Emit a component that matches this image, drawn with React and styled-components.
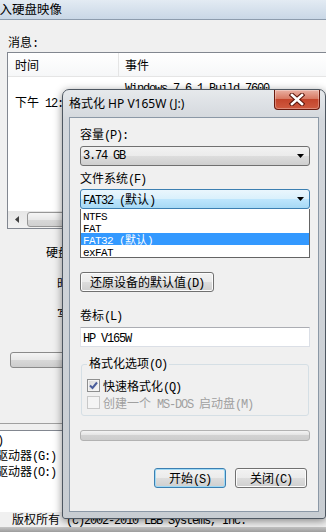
import React from 'react';
import styled, { createGlobalStyle } from 'styled-components';

const GlobalStyle = createGlobalStyle`
  html, body { margin: 0; padding: 0; background: #f0f0f0; }
  body {
    font-family: "Noto Sans CJK SC", "Noto Sans", sans-serif;
    font-size: 12px;
    color: #000;
  }
`;

// SimSun-like half width latin
const Lat = styled.span`
  font-family: "Liberation Mono", "DejaVu Sans Mono", monospace;
  font-size: 12px;
  letter-spacing: -1.2px;
`;

const Desktop = styled.div`
  position: relative;
  width: 326px;
  height: 532px;
  overflow: hidden;
  background: #f0f0f0;
`;

/* ---------- window behind ---------- */

const BgWindow = styled.div`
  display: flex;
  flex-direction: column;
  height: 100%;
`;

const BgTitle = styled.div`
  height: 19px;
  border-bottom: 1px solid #8d9cad;
  background: linear-gradient(#e3ebf3, #c9d7e6);
  font-size: 12.5px;
  line-height: 17px;
  white-space: nowrap;
`;

const BgTitleText = styled.span`
  display: inline-block;
  margin-left: -13px;
`;

const BgLabel = styled.div`
  margin-top: 15px;
  padding-left: 8px;
  height: 14px;
  line-height: 14px;
`;

const MsgList = styled.div`
  margin: 3px -20px 0 7px;
  height: 177px;
  box-sizing: border-box;
  border: 1px solid #828790;
  background: #fff;
  display: flex;
  flex-direction: column;
`;

const ListHead = styled.div`
  display: grid;
  grid-template-columns: 111px 1fr;
  height: 23px;
  border-bottom: 1px solid #e5e5e5;
  background: linear-gradient(#fff, #f6f7f8);
  line-height: 23px;
`;

const HeadCell = styled.div`
  padding-left: ${p => p.$pad}px;
  border-right: ${p => (p.$sep ? '1px solid #e5e5e5' : 'none')};
`;

const ListRow = styled.div`
  display: grid;
  grid-template-columns: 111px 1fr;
  height: 50px;
`;

const TimeCell = styled.div`
  padding-left: 7px;
  line-height: 50px;
  white-space: nowrap;
`;

const EventCell = styled.div`
  padding: 4px 0 0 6px;
  line-height: 12px;
  white-space: nowrap;
`;

const HScroll = styled.div`
  margin-top: auto;
  height: 17px;
  display: flex;
  background: linear-gradient(#e6e6e6, #f1f1f1);
`;

const ScrollArrow = styled.div`
  width: 18px;
  display: flex;
  align-items: center;
  justify-content: center;
`;

const ScrollThumb = styled.div`
  flex: 1;
  margin: 1px 0 1px 1px;
  border: 1px solid #979797;
  border-radius: 3px;
  background: linear-gradient(#f6f6f6, #e9e9e9 50%, #d9d9d9 50%, #d0d0d0);
`;

const FieldRows = styled.div`
  margin-top: 7px;
`;

const FieldRow = styled.div`
  height: 31px;
  line-height: 31px;
  padding-left: ${p => p.$indent}px;
  white-space: nowrap;
`;

const WideButton = styled.div`
  margin: 23px -20px 0 10px;
  height: 16px;
  box-sizing: border-box;
  border: 1px solid #8a8a8a;
  border-radius: 3px;
  background: linear-gradient(#f4f4f4, #e8e8e8 50%, #d8d8d8 50%, #cdcdcd);
`;

const Divider = styled.div`
  margin-top: 55px;
  height: 6px;
  border-top: 1px solid #a0a0a0;
`;

const DriveList = styled.div`
  height: 82px;
  box-sizing: border-box;
  border-top: 1px solid #828790;
  background: #fff;
`;

const DriveLine = styled.div`
  height: 16px;
  line-height: 16px;
  margin-left: ${p => p.$shift}px;
  white-space: nowrap;
`;

const Copyright = styled.div`
  height: 15px;
  line-height: 14px;
  padding-left: 12px;
  white-space: nowrap;
`;

const BottomStrip = styled.div`
  flex: 1;
  background: linear-gradient(#c6c6c6, #9c9c9c);
`;

/* ---------- format dialog ---------- */

const Dialog = styled.div`
  position: absolute;
  left: 62px;
  top: 89px;
  width: 264px;
  height: 430px;
  box-sizing: border-box;
  border: 1px solid #4e5761;
  border-radius: 7px 7px 3px 3px;
  background: linear-gradient(#e6e9ec, #d3d7dc 30px, #c8cdd2);
  padding: 0 6px 6px 6px;
  display: flex;
  flex-direction: column;
  box-shadow: 0 2px 8px rgba(0, 0, 0, 0.45);
`;

const TitleBar = styled.div`
  height: 27px;
  display: flex;
  align-items: flex-start;
`;

const TitleText = styled.div`
  flex: 1;
  line-height: 27px;
  font-size: 12px;
  white-space: nowrap;
  font-family: "Noto Sans", "Noto Sans CJK SC", sans-serif;
`;

const CloseButton = styled.div`
  width: 46px;
  height: 20px;
  margin-right: -1px;
  box-sizing: border-box;
  border: 1px solid #6a1a0e;
  border-top: none;
  border-radius: 0 0 4px 4px;
  background: linear-gradient(#eab0a3, #d87a64 45%, #c4452c 50%, #cf5a40 100%);
  box-shadow: inset 0 0 0 1px rgba(255, 255, 255, 0.3);
  display: flex;
  align-items: center;
  justify-content: center;
`;

const Client = styled.div`
  flex: 1;
  border: 1px solid #8b98a6;
  background: #f0f0f0;
  padding: 0 8px 0 10px;
  display: flex;
  flex-direction: column;
`;

const FieldLabel = styled.div`
  margin-top: ${p => p.$gap}px;
  height: 14px;
  line-height: 14px;
  white-space: nowrap;
`;

const Combo = styled.div`
  margin-top: ${p => p.$gap}px;
  height: 20px;
  box-sizing: border-box;
  border: 1px solid ${p => (p.$open ? '#3c7fb1' : '#707070')};
  border-radius: 3px;
  background: ${p =>
    p.$open
      ? 'linear-gradient(#eaf6fd, #d9f0fc 50%, #bee6fd 50%, #a7d9f5)'
      : 'linear-gradient(#f2f2f2, #ebebeb 50%, #dddddd 50%, #cfcfcf)'};
  display: flex;
  align-items: center;
  justify-content: space-between;
  padding: 0 5px 0 2px;
  white-space: nowrap;
`;

const DropList = styled.div`
  border: 1px solid #646464;
  border-top: none;
  background: #fff;
`;

const DropItem = styled.div`
  height: 12px;
  line-height: 12px;
  font-size: 11px;
  padding-left: 2px;
  white-space: nowrap;
  background: ${p => (p.$sel ? '#3399ff' : 'transparent')};
  color: ${p => (p.$sel ? '#fff' : '#000')};

  ${Lat} {
    font-size: 11px;
    letter-spacing: -0.6px;
  }
`;

const PushButton = styled.button`
  width: ${p => p.$w}px;
  height: 20px;
  padding: 0;
  border: 1px solid ${p => (p.$focus ? '#3c7fb1' : '#707070')};
  border-radius: 3px;
  background: linear-gradient(#f2f2f2, #ebebeb 50%, #dddddd 50%, #cfcfcf);
  box-shadow: inset 0 0 0 1px ${p => (p.$focus ? '#9fdaf6' : '#fcfcfc')};
  font-family: inherit;
  font-size: 12px;
  line-height: 18px;
  color: #000;
  white-space: nowrap;
`;

const RestoreButton = styled(PushButton)`
  margin-top: 14px;
  align-self: flex-start;
`;

const TextBox = styled.div`
  margin-top: 5px;
  height: 20px;
  box-sizing: border-box;
  border: 1px solid #dbdfe6;
  border-top-color: #abadb3;
  border-left-color: #e2e3ea;
  background: #fff;
  padding-left: 2px;
  line-height: 18px;
`;

const Group = styled.fieldset`
  margin: 9px 1px 0;
  padding: 5px 0 4px 5px;
  border: 1px solid #d5dfe5;
  border-radius: 3px;
  min-width: 0;
`;

const GroupTitle = styled.legend`
  padding: 0 2px;
  line-height: 14px;
  font-size: 12px;
`;

const CheckRow = styled.div`
  height: 17px;
  display: flex;
  align-items: center;
  gap: 3px;
  white-space: nowrap;
  color: ${p => (p.$disabled ? '#a0a0a0' : '#000')};
`;

const CheckBox = styled.span`
  width: 13px;
  height: 13px;
  box-sizing: border-box;
  border: 1px solid ${p => (p.$disabled ? '#c8c8c8' : '#8e8f8f')};
  background: ${p => (p.$disabled ? '#f4f4f4' : 'linear-gradient(135deg, #d6d6d6, #fbfbfb)')};
  box-shadow: inset 0 0 0 1px #f4f4f4;
  display: flex;
  align-items: center;
  justify-content: center;
`;

const Progress = styled.div`
  margin-top: 14px;
  height: 11px;
  box-sizing: border-box;
  border: 1px solid #b2b2b2;
  border-radius: 3px;
  background: linear-gradient(#f3f3f3, #e2e2e2 50%, #d2d2d2 50%, #cdcdcd);
`;

const ButtonRow = styled.div`
  margin-top: 27px;
  display: flex;
  justify-content: flex-end;
  gap: 9px;
  padding-right: 3px;
`;

const Arrow = () => (
  <svg width="7" height="4" viewBox="0 0 7 4">
    <polygon points="0,0 7,0 3.5,4" fill="#000" />
  </svg>
);

const CloseX = () => (
  <svg width="16" height="13" viewBox="0 0 16 13">
    <path d="M3 2 L13 11 M13 2 L3 11" stroke="#5b150a" strokeWidth="4.6" strokeLinecap="square" />
    <path d="M3 2 L13 11 M13 2 L3 11" stroke="#fff" strokeWidth="2.6" strokeLinecap="square" />
  </svg>
);

const Tick = () => (
  <svg width="9" height="9" viewBox="0 0 9 9">
    <path d="M1 4.5 L3.5 7 L8 1.5" fill="none" stroke="#4a5d9b" strokeWidth="2" />
  </svg>
);

const fsItems = [
  { key: 'ntfs', label: <Lat>NTFS</Lat> },
  { key: 'fat', label: <Lat>FAT</Lat> },
  { key: 'fat32', label: <><Lat>FAT32 (</Lat>默认<Lat>)</Lat></>, sel: true },
  { key: 'exfat', label: <Lat>exFAT</Lat> },
];

export default function App() {
  return (
    <>
      <GlobalStyle />
      <Desktop>
        <BgWindow>
          <BgTitle>
            <BgTitleText>写入硬盘映像</BgTitleText>
          </BgTitle>
          <BgLabel>消息<Lat>:</Lat></BgLabel>
          <MsgList>
            <ListHead>
              <HeadCell $pad={7} $sep>时间</HeadCell>
              <HeadCell $pad={6}>事件</HeadCell>
            </ListHead>
            <ListRow>
              <TimeCell>下午<Lat> 12:</Lat></TimeCell>
              <EventCell>
                <Lat>Windows 7 6.1 Build 7600</Lat>
              </EventCell>
            </ListRow>
            <HScroll>
              <ScrollArrow>
                <svg width="4" height="7" viewBox="0 0 4 7">
                  <polygon points="4,0 4,7 0,3.5" fill="#404040" />
                </svg>
              </ScrollArrow>
              <ScrollThumb />
            </HScroll>
          </MsgList>
          <FieldRows>
            <FieldRow $indent={46}>硬盘</FieldRow>
            <FieldRow $indent={57}>时</FieldRow>
            <FieldRow $indent={57}>写</FieldRow>
          </FieldRows>
          <WideButton />
          <Divider />
          <DriveList>
            <DriveLine $shift={-57}>驱动器<Lat>(F:)</Lat></DriveLine>
            <DriveLine $shift={-4}>驱动器<Lat>(G:)</Lat></DriveLine>
            <DriveLine $shift={-4}>驱动器<Lat>(O:)</Lat></DriveLine>
          </DriveList>
          <Copyright>
            版权所有<Lat> (c)2002-2010 LBB Systems, Inc.</Lat>
          </Copyright>
          <BottomStrip />
        </BgWindow>

        <Dialog>
          <TitleBar>
            <TitleText>格式化 HP V165W (J:)</TitleText>
            <CloseButton>
              <CloseX />
            </CloseButton>
          </TitleBar>
          <Client>
            <FieldLabel $gap={9}>容量<Lat>(P):</Lat></FieldLabel>
            <Combo $gap={5}>
              <Lat>3.74 GB</Lat>
              <Arrow />
            </Combo>
            <FieldLabel $gap={5}>文件系统<Lat>(F)</Lat></FieldLabel>
            <Combo $gap={4} $open>
              <span>
                <Lat>FAT32 (</Lat>默认<Lat>)</Lat>
              </span>
              <Arrow />
            </Combo>
            <DropList>
              {fsItems.map(it => (
                <DropItem key={it.key} $sel={it.sel}>
                  {it.label}
                </DropItem>
              ))}
            </DropList>
            <RestoreButton $w={134}>还原设备的默认值<Lat>(D)</Lat></RestoreButton>
            <FieldLabel $gap={16}>卷标<Lat>(L)</Lat></FieldLabel>
            <TextBox>
              <Lat>HP V165W</Lat>
            </TextBox>
            <Group>
              <GroupTitle>格式化选项<Lat>(O)</Lat></GroupTitle>
              <CheckRow>
                <CheckBox>
                  <Tick />
                </CheckBox>
                <span>快速格式化<Lat>(Q)</Lat></span>
              </CheckRow>
              <CheckRow $disabled>
                <CheckBox $disabled />
                <span>创建一个<Lat> MS-DOS </Lat>启动盘<Lat>(M)</Lat></span>
              </CheckRow>
            </Group>
            <Progress />
            <ButtonRow>
              <PushButton $w={72} $focus>开始<Lat>(S)</Lat></PushButton>
              <PushButton $w={72}>关闭<Lat>(C)</Lat></PushButton>
            </ButtonRow>
          </Client>
        </Dialog>
      </Desktop>
    </>
  );
}
